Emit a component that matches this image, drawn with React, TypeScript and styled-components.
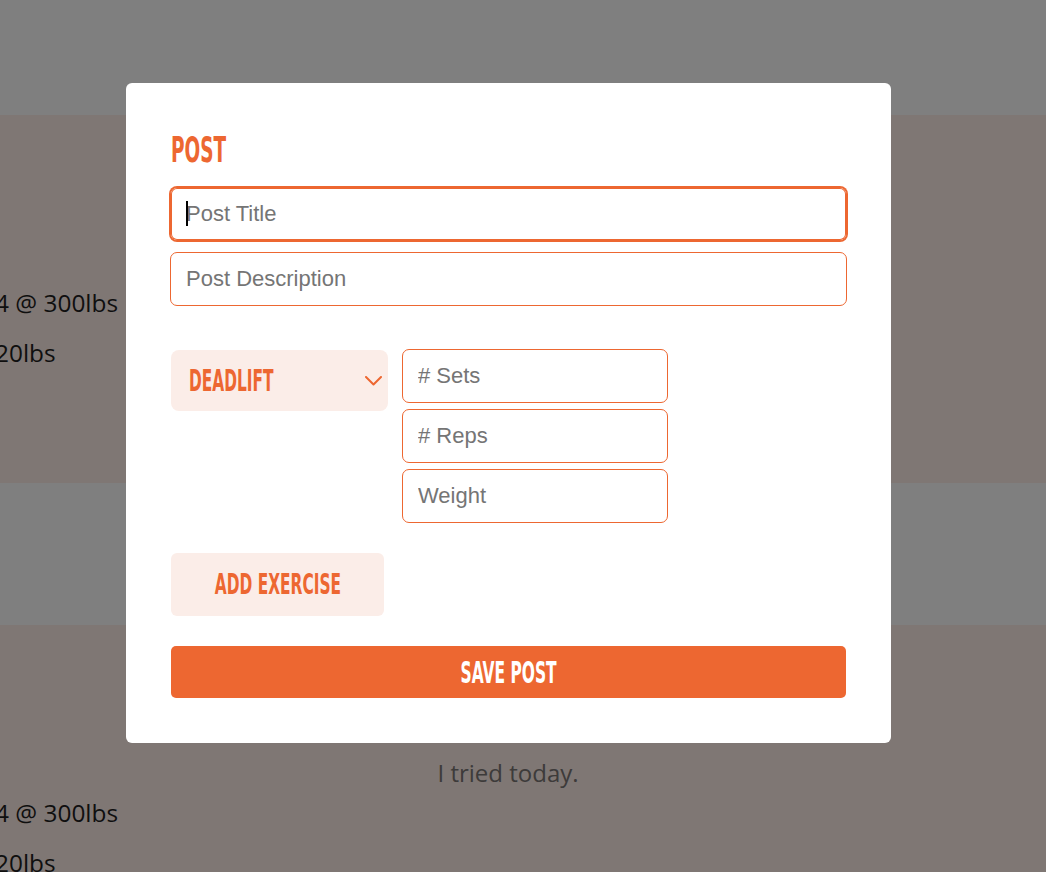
import React from "react";
import styled, { createGlobalStyle } from "styled-components";

const ORANGE = "#ed6731";
const PINK = "#fbede8";

const GlobalStyle = createGlobalStyle`
  html, body { margin: 0; padding: 0; }
  body {
    background: #ffffff;
    overflow: hidden;
    font-family: "Open Sans", "Noto Sans", sans-serif;
  }
  * { box-sizing: border-box; }
`;

const Page = styled.main`
  padding-top: 115px;
`;

const Feed = styled.div`
  display: flex;
  flex-direction: column;
  gap: 142px;
`;

const Card = styled.article`
  height: 368px;
  background: #feeee8;
  padding: 40px 30px 0 0;
  display: flex;
  flex-direction: column;
`;

const CardTitle = styled.h3`
  margin: 0 0 60px;
  height: 32px;
  font-size: 26px;
  line-height: 32px;
  font-weight: 600;
  color: #222;
  text-align: center;
`;

const Description = styled.p`
  margin: 0 0 8px;
  font-size: 24px;
  line-height: 32px;
  color: #7b7675;
  text-align: center;
`;

const Stats = styled.ul`
  list-style: none;
  margin: 0 0 0 -5px;
  padding: 0;
  display: flex;
  flex-direction: column;
  gap: 18px;
`;

const Stat = styled.li`
  font-size: 24.4px;
  line-height: 32px;
  color: #1e1e1e;
  white-space: nowrap;
`;

const Overlay = styled.div`
  position: fixed;
  inset: 0;
  background: rgba(0, 0, 0, 0.5);
  padding: 83px 0 0 126px;
`;

const Modal = styled.form`
  width: 765px;
  background: #fff;
  border-radius: 6px;
  padding: 45px;
  display: flex;
  flex-direction: column;
`;

const Heading = styled.h2`
  margin: 4px 0 19px;
  height: 36px;
  line-height: 36px;
  color: ${ORANGE};
`;

const Display = styled.span<{ $size: number; $origin?: string; $scale?: number }>`
  display: inline-block;
  font-family: "DejaVu Sans Condensed", "DejaVu Sans", sans-serif;
  font-stretch: condensed;
  font-weight: 700;
  font-size: ${(p) => p.$size}px;
  line-height: 1;
  white-space: nowrap;
  text-transform: uppercase;
  transform: scaleX(${(p) => p.$scale ?? 0.57});
  transform-origin: ${(p) => p.$origin ?? "left center"};
`;

const FieldWrap = styled.div`
  position: relative;
  margin: 0 -1px;
`;

const TextInput = styled.input<{ $focused?: boolean }>`
  display: block;
  width: 100%;
  height: 54px;
  border: 1px solid ${ORANGE};
  border-radius: 7px;
  padding: 0 15px;
  font-family: "Liberation Sans", Arial, sans-serif;
  font-size: 22px;
  color: #222;
  background: #fff;
  outline: none;
  box-shadow: ${(p) =>
    p.$focused ? `0 0 0 1px ${ORANGE}, inset 0 0 0 1px ${ORANGE}` : "none"};
  &::placeholder {
    color: #757575;
    opacity: 1;
  }
`;

const Caret = styled.span`
  position: absolute;
  left: 16px;
  top: 14px;
  width: 2px;
  height: 25px;
  background: #000;
`;

const FieldStack = styled.div<{ $gap: number }>`
  display: flex;
  flex-direction: column;
  gap: ${(p) => p.$gap}px;
`;

const ExerciseRow = styled.div`
  margin-top: 43px;
  display: flex;
  align-items: flex-start;
  gap: 14px;
`;

const ExerciseSelect = styled.div`
  margin-top: 1px;
  width: 217px;
  height: 61px;
  border-radius: 8px;
  background: ${PINK};
  color: ${ORANGE};
  display: flex;
  align-items: center;
  justify-content: space-between;
  padding: 0 6px 0 18px;
  overflow: hidden;
`;

const Chevron = styled.svg`
  flex: none;
  width: 17px;
  height: 10px;
`;

const SetInputs = styled.div`
  width: 266px;
  display: flex;
  flex-direction: column;
  gap: 6px;
`;

const SoftButton = styled.button`
  margin-top: 30px;
  width: 213px;
  height: 63px;
  border: none;
  border-radius: 6px;
  background: ${PINK};
  color: ${ORANGE};
  display: flex;
  align-items: center;
  justify-content: center;
  padding: 0;
  overflow: hidden;
  cursor: pointer;
`;

const PrimaryButton = styled.button`
  margin-top: 30px;
  width: 100%;
  height: 52px;
  border: none;
  border-radius: 5px;
  background: ${ORANGE};
  color: #fff;
  display: flex;
  align-items: center;
  justify-content: center;
  padding: 0;
  overflow: hidden;
  cursor: pointer;
`;

const posts = [
  { title: "Leg Day", description: "Heavy pulls this morning.", stats: ["4 @ 300lbs", "20lbs"] },
  { title: "Back Day", description: "I tried today.", stats: ["4 @ 300lbs", "20lbs"] },
];

export default function App() {
  return (
    <>
      <GlobalStyle />
      <Page>
        <Feed>
          {posts.map((p, i) => (
            <Card key={i}>
              <CardTitle>{p.title}</CardTitle>
              <Description>{p.description}</Description>
              <Stats>
                {p.stats.map((s) => (
                  <Stat key={s}>{s}</Stat>
                ))}
              </Stats>
            </Card>
          ))}
        </Feed>
      </Page>
      <Overlay>
        <Modal onSubmit={(e) => e.preventDefault()}>
          <Heading>
            <Display $size={36}>Post</Display>
          </Heading>
          <FieldStack $gap={11}>
            <FieldWrap>
              <TextInput $focused placeholder="Post Title" />
              <Caret />
            </FieldWrap>
            <FieldWrap>
              <TextInput placeholder="Post Description" />
            </FieldWrap>
          </FieldStack>
          <ExerciseRow>
            <ExerciseSelect>
              <Display $size={30}>Deadlift</Display>
              <Chevron viewBox="0 0 17 10" fill="none">
                <polyline
                  points="1,1 8.5,8.5 16,1"
                  stroke={ORANGE}
                  strokeWidth="2"
                  strokeLinecap="round"
                  strokeLinejoin="round"
                />
              </Chevron>
            </ExerciseSelect>
            <SetInputs>
              <TextInput placeholder="# Sets" />
              <TextInput placeholder="# Reps" />
              <TextInput placeholder="Weight" />
            </SetInputs>
          </ExerciseRow>
          <SoftButton type="button">
            <Display $size={29} $scale={0.59} $origin="center">Add Exercise</Display>
          </SoftButton>
          <PrimaryButton type="submit">
            <Display $size={31} $scale={0.555} $origin="center">Save Post</Display>
          </PrimaryButton>
        </Modal>
      </Overlay>
    </>
  );
}
